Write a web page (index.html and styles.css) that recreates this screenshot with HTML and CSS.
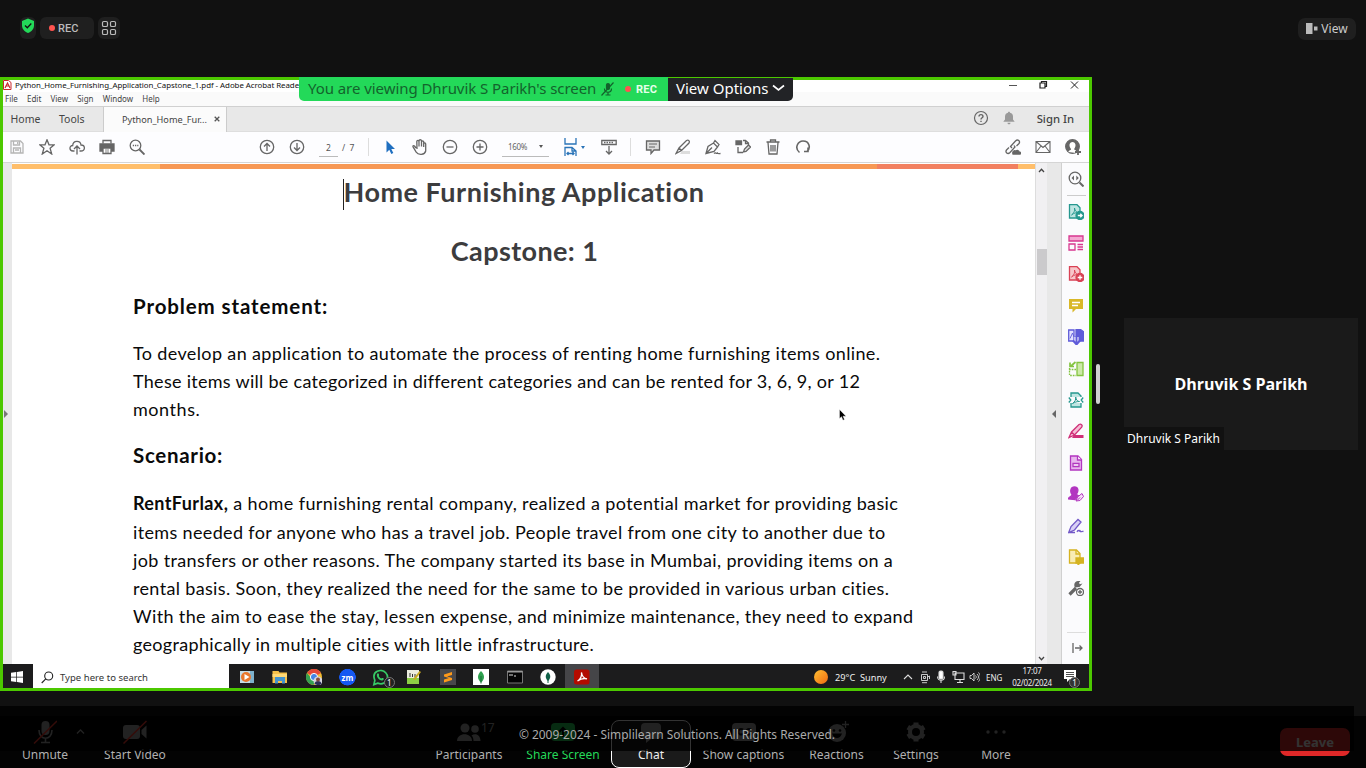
FILE: index.html
```html
<!DOCTYPE html>
<html lang="en">
<head>
<meta charset="utf-8">
<title>Meeting</title>
<link rel="stylesheet" href="styles.css">
</head>
<body>
<header class="topbar">
  <div class="pill shield"><svg width="14" height="16" viewBox="0 0 14 16"><path d="M7 .5 13 3v4.500c0 3.500-2.500 6-6 7.500C3.500 13.500 1 11 1 7.500V3z" fill="#23d959"/><path d="m4 7.500 2.300 2.300L10.300 5.500" fill="none" stroke="#111" stroke-width="1.300"/></svg></div>
  <div class="pill rec"><i class="dot"></i>REC</div>
  <div class="pill apps"><svg width="16" height="16" viewBox="0 0 16 16" fill="none" stroke="#bbb" stroke-width="1.200"><rect x="1.500" y="1.500" width="5" height="5" rx="1.300"/><rect x="9.500" y="1.500" width="5" height="5" rx="1.300"/><rect x="1.500" y="9.500" width="5" height="5" rx="1.300"/><rect x="9.500" y="9.500" width="5" height="5" rx="1.300"/></svg></div>
  <div class="pill view"><svg width="12" height="11" viewBox="0 0 12 11"><path d="M0 0h6.500v11H0z" fill="#bbb"/><path d="M8 3.500h3.500v4H8z" fill="#bbb"/></svg>View</div>
</header>

<main class="stage">
  <section class="share">
    <div class="banner"><div class="viewing"><span class="who">You are viewing Dhruvik S Parikh's screen</span>
      <svg width="13" height="14" viewBox="0 0 13 14" fill="none" stroke="#13632c" stroke-width="1.200"><rect x="5.500" y="1.500" width="3" height="6" rx="1.500" fill="#13632c"/><path d="M3.500 6.500c0 5 7 5 7 0M7 10.500v2.500M4.500 13h5M12.500.5.500 13.500"/></svg>
      <i class="dot"></i><b>REC</b></div><div class="options">View Options<svg width="13" height="8" viewBox="0 0 13 8"><path d="M1 1.500 6.500 6 12 1.500" fill="none" stroke="#fff" stroke-width="1.700"/></svg></div></div>

    <div class="titlebar">
      <svg class="pdf" width="9" height="10" viewBox="0 0 9 10"><path d="M.5.500h5L8 2.500v7H.5z" fill="#fff" stroke="#c9282d"/><path d="m2 8 2.500-5L7 8M3 6h3" fill="none" stroke="#c9282d" stroke-width="1.200"/></svg>
      <span class="wt">Python_Home_Furnishing_Application_Capstone_1.pdf - Adobe Acrobat Reade</span>
      <svg class="winctl" width="76" height="10" viewBox="0 0 76 10" fill="none" stroke="#222"><path d="M2 5.500h8" stroke="#555"/><path d="M33 3h5v5h-5zM34.500 3V1.500h5v5H38" stroke-width="1.200"/><path d="m64 1.500 7 7m0-7-7 7"/></svg>
    </div>
    <nav class="menubar"><span>File</span><span>Edit</span><span>View</span><span>Sign</span><span>Window</span><span>Help</span></nav>

    <div class="tabs">
      <span class="tab home">Home</span><span class="tab tools">Tools</span>
      <span class="tab file"><span>Python_Home_Fur...</span><svg width="6" height="6" viewBox="0 0 6 6"><path d="m.7.700 4.600 4.600m0-4.600L.7 5.300" stroke="#555" stroke-width="1.300"/></svg></span>
      <span class="account">
        <svg width="16" height="16" viewBox="0 0 16 16" fill="none" stroke="#666" stroke-width="1.200"><circle cx="8" cy="8" r="6.500"/><path d="M6 6.500C6 4 10 4 10 6.500 10 7.800 8 7.700 8 9.500M8 10.700v1.200" stroke-width="1.400"/></svg>
        <svg width="14" height="14" viewBox="0 0 14 14" fill="#999"><path d="M7 .7c.8 0 1 .5 1 1C10 2 11 3.500 11 5.500V8.500l1.700 2.300H1.300L3 8.500v-3C3 3.500 4 2 6 1.700c0-.5.200-1 1-1zM5.500 11.700h3c0 2-3 2-3 0z"/></svg>
        <b>Sign In</b>
      </span>
    </div>

    <div class="tools-row">
      <div class="grp g1">
        <span><svg viewBox="0 0 16 16" stroke="#b5b5b5"><path d="M2 2h9.500L14 4.500V14H2z"/><path d="M4.500 2v4h6V2M4.500 14V9h7v5M6 11h4M8.700 3v2"/></svg></span>
        <span><svg viewBox="0 0 16 16"><path d="m8 .8 2 5h5.300l-4.200 3.500 1.600 5.700L8 11.800 3.300 15l1.600-5.700L.7 5.800H6z"/></svg></span>
        <span><svg viewBox="0 0 16 16"><path d="M5.500 12H4C0 12 0 6.500 3.700 6.500 4 1 11.500 1 12 6c4.500 0 4.500 6 0 6h-1.500M8 15.500V7.500M5 10l3-3 3 3"/></svg></span>
        <span><svg viewBox="0 0 16 16"><path d="M4 4.500V1.500h8v3" /><path d="M1 5h14v7H1z" fill="#666"/><path d="M4 9h8v5.500H4z" fill="#fff"/><path d="M6 11h4M6 13h4" stroke-width=".8"/></svg></span>
        <span><svg viewBox="0 0 16 16"><circle cx="6.500" cy="6.500" r="5.300"/><path d="m10.500 10.500 5 5" stroke-width="1.900"/><path d="M3.800 6.500h5.600" stroke-dasharray="1.300 .9"/></svg></span>
      </div>
      <div class="grp g2">
        <span><svg viewBox="0 0 16 16"><circle cx="8" cy="8" r="6.700"/><path d="M8 12V4.500M5 7.500l3-3 3 3"/></svg></span>
        <span><svg viewBox="0 0 16 16"><circle cx="8" cy="8" r="6.700"/><path d="M8 4v7.500m-3-3 3 3 3-3"/></svg></span>
      </div>
      <div class="pageno"><span class="field">2</span><span>/ &nbsp;7</span></div>
      <i class="vr"></i>
      <div class="grp g3">
        <span><svg viewBox="0 0 16 16"><path d="M4.500 1.500v12l2.800-2.700 2 4.200 2-1-2-4h3.700z" fill="#1f6fc0" stroke="none"/></svg></span>
        <span><svg viewBox="0 0 16 16"><path d="M4 9 2.500 7C1.500 6 .5 7 1.200 8.200l3 5c2 3 8.500 3 9.500-1.200V5c0-1.500-2-1.500-2 0v3V3c0-1.500-2.200-1.500-2.200 0v4.500V2C9.500.3 7 .3 7 2v5.500-5C7 1 4.800 1 4.800 2.500L5 10"/></svg></span>
        <span><svg viewBox="0 0 16 16"><circle cx="8" cy="8" r="6.700"/><path d="M4.500 8h7"/></svg></span>
        <span><svg viewBox="0 0 16 16"><circle cx="8" cy="8" r="6.700"/><path d="M4.500 8h7M8 4.500v7"/></svg></span>
      </div>
      <div class="zoom"><span>160%</span><i class="tri"></i></div>
      <div class="fit"><svg viewBox="0 0 16 18" width="16" height="18" stroke="#2a74b8"><path d="M2 0v6h11V0M2 18V9.500h7l4 3.500v5M9 9.500V13h4M4 15.500h7M5.500 14 4 15.500 5.500 17M9.500 14l1.500 1.500L9.500 17"/></svg><i class="tri blue"></i></div>
      <div class="grp g4"><span><svg viewBox="0 0 16 16"><path d="M.8 1.500h14.400v4H.8z"/><path d="M3 3.500h10" stroke-dasharray="1.500 1"/><path d="M8 7v8m-3-3 3 3 3-3"/></svg></span></div>
      <i class="vr"></i>
      <div class="grp g5">
        <span><svg viewBox="0 0 16 16"><path d="M1.500 2h13v9H9l-3 3.500V11H1.500z" fill="#ddd"/><path d="M4 5h8M4 8h6" stroke-width="1"/></svg></span>
        <span><svg viewBox="0 0 16 16"><path d="M7 12h8v3H5z" fill="#ddd" stroke="none"/><path d="M1 14.500 4 9l7.500-7.500c2-1 3.500.5 2.500 2.500l-7.500 7.500zM4 9l2.500 2.500" /></svg></span>
        <span><svg viewBox="0 0 16 16"><path d="m1 14.500 2-7L8.500 4l4 4L9 12.500zM8.500 4l1.500-2.500 4 4L12.500 8M1.500 14 7 8.500M9 14.500c2-2 2 1 3.500-.5.500 1 2 .5 3 .5"/></svg></span>
        <span><svg viewBox="0 0 16 16"><path d="M3 8v5.500h5M8 1.500h2.500L13.500 4v2M10.500 1.500V4.500h3"/><path d="M1 2h5.500v3.500H1z" fill="#666"/><path d="m8.500 13 1-3 4-4 2 2-4.500 4.500z" fill="#ddd"/></svg></span>
        <span><svg viewBox="0 0 16 16"><path d="M1.500 3h13M5.500 3V1h5v2M3 3.500l1 11.500h8l1-11.500M6 6v6.500M8 6v6.500M10 6v6.500"/></svg></span>
        <span><svg viewBox="0 0 16 16"><path d="M4.500 13.500C-1 9 3 2 8 2c6.500 0 8 7 4 10.500M9 12.500h4V8.500" stroke-width="1.600"/></svg></span>
      </div>
      <div class="grp g6">
        <span><svg viewBox="0 0 16 16"><path d="m7 9-1.500-1.500L10.500 2c2.500-2.500 5 .5 3.500 2.500L11.500 7M9 6.500l1 1.500-5 5.500c-2.500 2.500-5-.5-3.500-2.500L4 8.500"/><path d="M8 15c-1-3 2-4 3-2.500 1-2 3-.5 3 .5 2 0 2 2 1 2z" fill="#666"/></svg></span>
        <span><svg viewBox="0 0 16 16"><path d="M1 2.500h14v11H1zM1 2.500l7 6 7-6M1 13.500l5-6.500m9 6.500L10 7" stroke-width="1.100"/></svg></span>
        <span><svg viewBox="0 0 16 16"><circle cx="7.500" cy="7.500" r="6.800" fill="#666"/><path d="M3.500 13c0-2 3-1.500 2.500-3C3 6 5 3 7.500 3S12 6 9.200 10c0 1 1 1 1.800 1.500V14z" fill="#fff" stroke="none"/><path d="M13 10v6M10 13h6" stroke-width="1.800"/></svg></span>
      </div>
    </div>

    <div class="work">
      <div class="gutter left"><i class="arr r"></i></div>
      <article class="page">
        <div class="band"><i class="b1"></i><i class="b2"></i><i class="b3"></i><i class="b4"></i></div>
        <h1><i class="caret"></i>Home Furnishing Application</h1>
        <h2>Capstone: 1</h2>
        <h3 class="t1">Problem statement:</h3>
        <p><span class="a1">To develop an application to automate the process of renting home furnishing items online.</span>
        <span class="a2">These items will be categorized in different categories and can be rented for 3, 6, 9, or 12</span>
        <span class="a3">months.</span></p>
        <h3 class="t2">Scenario:</h3>
        <p><span class="c1"><b>RentFurlax,</b> a home furnishing rental company, realized a potential market for providing basic</span>
        <span class="c2">items needed for anyone who has a travel job. People travel from one city to another due to</span>
        <span class="c3">job transfers or other reasons. The company started its base in Mumbai, providing items on a</span>
        <span class="c4">rental basis. Soon, they realized the need for the same to be provided in various urban cities.</span>
        <span class="c5">With the aim to ease the stay, lessen expense, and minimize maintenance, they need to expand</span>
        <span class="c6">geographically in multiple cities with little infrastructure.</span></p>
        <svg class="pointer" width="8" height="12" viewBox="0 0 8 12"><path d="M.5.500v9l2-1.800 1.500 3.500 1.500-.7L4 7.200h3z" fill="#000" stroke="#fff" stroke-width=".4"/></svg>
      </article>
      <div class="scroll"><svg width="7" height="5" viewBox="0 0 7 5"><path d="m1 4 2.500-2.700L6 4" fill="none" stroke="#444" stroke-width="1.300"/></svg><i class="thumb"></i><svg width="7" height="5" viewBox="0 0 7 5"><path d="m1 1 2.500 2.700L6 1" fill="none" stroke="#444" stroke-width="1.300"/></svg></div>
      <div class="gutter right"><i class="arr l"></i></div>
      <aside class="rail">
        <span class="first"><svg viewBox="0 0 16 16" stroke="#666"><circle cx="7" cy="7" r="5.800"/><path d="m11.500 11.500 4 4" stroke-width="2"/><path d="M6 4.500 3.500 7 6 9.500zM8.300 4.500 10.800 7 8.300 9.500z" fill="#666" stroke="none"/></svg></span>
        <span><svg viewBox="0 0 16 16" stroke="#26988f"><path d="M1.500.700h7.500l3 3V14H1.500z" fill="#bfe5e2"/><path d="M3.500 11C6 9 7 7 6.500 4 7 7 8.500 8.500 10.500 8.500 8 8.500 6 9 3.500 11z" stroke-width=".9"/><circle cx="12" cy="11.500" r="4" fill="#26988f"/><path d="M9.800 11.500H14m-1.700-1.800 1.800 1.800-1.800 1.800" stroke="#fff"/></svg></span>
        <span><svg viewBox="0 0 16 16" stroke="#d83790"><path d="M1 1h14v5H1z" fill="#f4a9d2"/><path d="M1 9h6v6H1zM9.500 9.500H15M9.500 12H15M9.500 14.500H15"/></svg></span>
        <span><svg viewBox="0 0 16 16" stroke="#d94255"><path d="M1.500.700h7.500l3 3V14H1.500z" fill="#f7c6ca"/><path d="M3.500 11C6 9 7 7 6.500 4 7 7 8.500 8.500 10.500 8.500 8 8.500 6 9 3.500 11z" stroke-width=".9"/><circle cx="12" cy="11.500" r="4" fill="#d94255"/><path d="M9.700 11.500h4.600M12 9.200v4.600" stroke="#fff"/></svg></span>
        <span><svg viewBox="0 0 16 16"><path d="M1 1h14v10H8l-3.500 3.500V11H1z" fill="#d9b828" stroke="none"/><path d="M4 4.500h8M4 7.500h6" stroke="#fff"/></svg></span>
        <span><svg viewBox="0 0 16 16" stroke="#5f5bd9"><path d="M.7 1H6v11H.7z" fill="#e4e3ff"/><path d="M8 .5h4.500L16 3v9H8z" fill="#5f5bd9"/><path d="M2 9.500 4.500 4 6 8" stroke-width=".9"/><path d="M8.500 8v7" stroke="#fff" stroke-width="4"/><path d="M8.500 7v8M5 11.500l3.500 4 3.500-4" stroke-width="2"/></svg></span>
        <span><svg viewBox="0 0 16 16" stroke="#84c441"><path d="M9 1.500h6v13H9z" fill="#cceaa8"/><path d="M1.500 7v7.500H8M1 8.500h7" stroke-dasharray="1.700 1"/><path d="M7.500 1 3 5M2 1.500v4h4" stroke-width="1.700"/></svg></span>
        <span><svg viewBox="0 0 16 16" stroke="#26988f"><path d="M3 5V1h7l3 3v1M3 11v4h10v-4" fill="#bfe5e2"/><path d="M.8 5.500 2.800 8l-2 2.500M15.200 5.500l-2 2.500 2 2.500"/><path d="M4.500 11.500C7 9.500 8 8 7.700 5 8 8 9.500 9.500 11.500 9.500 9 9.500 7 10 4.500 11.500z" stroke-width="1"/></svg></span>
        <span><svg viewBox="0 0 16 16" stroke="#cf2f78"><path d="M6 12h9.500v3H4z" fill="#cf2f78" stroke="none"/><path d="m1 14.500 2.500-5.500L11 1.500c2-1 4 .5 2.700 2.700L6.500 12zM3.500 9l3 3" fill="#f6bcd5"/></svg></span>
        <span><svg viewBox="0 0 16 16" stroke="#b236c0"><path d="M2.500 1H10l3.500 3.500V15h-11z" fill="#e8b6ee"/><path d="M9.500 1v4h4M5 8.500h6v3H5z" fill="#fff"/></svg></span>
        <span><svg viewBox="0 0 16 16" stroke="#b236c0"><path d="M.5 13c0-3 4-2 3.500-4.500C1.500 5 3 1 6.500 1s4.500 3.500 2 7c0 1.500 2 1 2 2L7 13.500z" fill="#b236c0"/><path d="m8 15 1.500-4L14 7.500l1.500 3-3.500 4zM9 14.500l3-3" fill="#f6dff8" stroke-width="1"/></svg></span>
        <span><svg viewBox="0 0 16 16" stroke="#7359c8"><path d="M.7 14.500 3 8.500 10 1.500l3 2.500-6.500 8zM1 14.500h6M9 14c2-4 2 1 3-2 0 3 1.500 1 3.500 1.500" fill="#d9d0f6"/></svg></span>
        <span><svg viewBox="0 0 16 16" stroke="#d5b321"><path d="M1.500 1h7l3.500 3.500V14H1.500z" fill="#f8ecb4"/><path d="M8 1v4h4"/><path d="M8 9h7.500v5H12l-2 2v-2H8z" fill="#d5b321"/></svg></span>
        <span><svg viewBox="0 0 16 16" stroke="#666"><path d="M1.500 14.500 8 8" stroke-width="3.200"/><path d="M10 1c-3.500 0-4.500 4-3 6.500l4.500-.5L14.500 3.500l-2.700.7-.8-1.500L12.500 1z" fill="#666" stroke="none"/><circle cx="12" cy="12" r="3.500" fill="#fff"/><path d="M10 12h4M12 10v4"/></svg></span>
        <span class="last"><svg viewBox="0 0 16 16" stroke="#666"><path d="M5 3v10M7 8h7m-2.500-2.500L14 8l-2.500 2.500"/></svg></span>
      </aside>
    </div>

    <div class="taskbar">
      <div class="start"><svg width="12" height="12" viewBox="0 0 12 12" fill="#fff"><path d="M0 1.700 5.300 1v4.700H0zM6 .9 12 0v5.700H6zM0 6.400h5.300V11L0 10.300zM6 6.400h6V12l-6-.9z"/></svg></div>
      <div class="search"><svg width="13" height="13" viewBox="0 0 13 13" fill="none" stroke="#222" stroke-width="1.100"><circle cx="7.700" cy="5" r="4"/><path d="M4.800 7.800.7 12"/></svg>Type here to search</div>
      <div class="apps-row">
        <span><svg viewBox="0 0 16 16"><path d="M4 2h11v12H4z" fill="#7eb1cc"/><path d="M1 2h10v12H1z" fill="#c4dce8"/><circle cx="7" cy="8" r="5" fill="#e8762c"/><path d="m5.500 5 5 3-5 3z" fill="#fff"/></svg></span>
        <span><svg viewBox="0 0 16 16"><path d="M.5 2h6l1 1.500H15V14H.5z" fill="#f5c04a"/><path d="M.5 5H15v3H.5z" fill="#ffd977"/><path d="M3 8h10v6.500h-3V12H6v2.500H3z" fill="#4494cf"/></svg></span>
        <span><svg viewBox="0 0 16 16"><circle cx="8" cy="8" r="8" fill="#f3bd2f"/><path d="M8 8 1 4a8 8 0 0 1 14 0z" fill="#e4483b"/><path d="M1 4a8 8 0 0 0 6.500 12L10 10 6 10z" fill="#35a152"/><circle cx="8" cy="8" r="3.600" fill="#4384e8" stroke="#fff"/><circle cx="12" cy="12" r="4.500" fill="#d5d4df"/><path d="M8.500 15c0-4 7-4 7 0l-3 1.500z" fill="#2c2e58"/><circle cx="12" cy="10.500" r="2" fill="#83483b"/></svg></span>
        <span class="zm">zm</span>
        <span><svg viewBox="0 0 18 18" class="wa"><path d="M2 16.500 3 12C-1 2 10-1 14.500 4s0 14-8.500 11z" fill="none" stroke="#37ca66" stroke-width="1.800"/><path d="M5.500 5c1-1.500 2 0 2 1.500-1 1 1 3 2.500 3.500 1-1 2.500-.5 2.500.8-2.500 4-9-2.300-7-5.800z" fill="#37ca66"/></svg><em class="badge">1</em></span>
        <span><svg viewBox="0 0 16 16"><path d="M1 1h12v14H1z" fill="#ececdf"/><path d="M1 9h12v6H1z" fill="#8dcf45"/><path d="M4 4v4M6.500 5v3M9 5v3" stroke="#333"/><path d="m7 10 6.500-8L15 3 9 11z" fill="#c8a821"/></svg></span>
        <span><svg viewBox="0 0 16 16"><path d="M0 0h16v16H0z" fill="#48484b"/><path d="m4 5.500 8-2.500v3L7 7.500l5 1.500v2L4 13.500v-3L9 9 4 7.500z" fill="#ff9a1a"/></svg></span>
        <span><svg viewBox="0 0 16 16"><path d="M0 0h16v16H0z" fill="#fff"/><path d="M8 2c4 4 4 8 0 11.500C4 10 4 6 8 2z" fill="#2ea04e"/><path d="M8 7v7.500" stroke="#176b35"/></svg></span>
        <span><svg viewBox="0 0 16 16"><path d="M.5 2h15v12H.5z" fill="#050505" stroke="#777"/><path d="M.5 2h15v1.500H.5z" fill="#999"/><path d="M2 6h4m1 1h2" stroke="#ddd"/></svg></span>
        <span><svg viewBox="0 0 16 16"><circle cx="8" cy="8" r="7.700" fill="#fff"/><path d="M8 3c3 3 3 6 0 9-3-3-3-6 0-9z" fill="#116149"/><path d="M8 8v6" stroke="#116149"/></svg></span>
        <span class="on"><svg viewBox="0 0 16 16"><rect x="0" y=".5" width="15.500" height="15" rx="2.500" fill="#b30b00"/><path d="M3.500 12C7 10 8 6 7.500 3.500 8 7 10 9.500 13 9.800 9.500 9 7 9.500 3.500 12z" fill="none" stroke="#fff" stroke-width="1.300"/></svg></span>
      </div>
      <div class="tray">
        <svg class="sun" width="14" height="14" viewBox="0 0 14 14"><defs><linearGradient id="s" x2="1" y2="1"><stop stop-color="#ffc032"/><stop offset="1" stop-color="#f06a12"/></linearGradient></defs><circle cx="7" cy="7" r="7" fill="url(#s)"/></svg>
        <span class="weather">29°C &nbsp;Sunny</span>
        <svg class="sys" width="78" height="14" viewBox="0 0 78 14" fill="none" stroke="#ddd" stroke-width="1.100"><path d="m2 9 4-4 4 4"/><path d="M19.500 4.500h6v6h-6zM20 2h5M20 12.700h5M25.500 7l2-1v3M21.500 6.500h2v2h-2z" stroke-width=".9"/><rect x="37" y="1" width="4" height="8" rx="1.500" fill="#fff"/><path d="M35.500 6.500c0 5 7 5 7 0M39 10.500V13"/><path d="M53 3h9v6.500h-9zM55 12.500h6M58 10v2M51 1.500h3V5h-3z"/><path d="M68 5.500h1.500L72 3v8L69.500 8.500H68zM73.500 5.500c1 1 1 2 0 3M75 4c2 2 2 4 0 6M76.500 2.500c2.500 3 2.500 6 0 9" stroke-width=".9"/></svg>
        <span class="eng">ENG</span>
        <span class="clock"><span>17:07</span><span>02/02/2024</span></span>
        <span class="note"><svg width="13" height="13" viewBox="0 0 13 13"><path d="M0 0h12v9H6l-3 3V9H0z" fill="#fff"/><path d="M2 2.500h8M2 4.500h8M2 6.500h8" stroke="#222" stroke-width=".8"/></svg><em class="badge">1</em></span>
      </div>
    </div>
  </section>

  <i class="handle"></i>
  <section class="tile"><strong>Dhruvik S Parikh</strong><span class="name">Dhruvik S Parikh</span></section>
</main>

<footer class="bar">
  <div class="ctl unmute"><svg width="24" height="24" viewBox="0 0 24 24"><rect x="8.500" y="1" width="8" height="14" rx="4" fill="#aaa"/><path d="M6 10c0 11 13 11 13 0M12.500 18.500V22M8 22.500h9" fill="none" stroke="#aaa" stroke-width="1.600"/><path d="M24 1 1 23.500" stroke="#ff3a2c" stroke-width="1.500"/></svg><label>Unmute</label></div>
  <div class="ctl chev"><svg width="9" height="24" viewBox="0 0 9 24"><path d="m1 13.500 3.500-3.500L8 13.500" fill="none" stroke="#aaa" stroke-width="1.300"/></svg></div>
  <div class="ctl video"><svg width="26" height="24" viewBox="0 0 26 24"><rect x="1" y="5" width="17" height="14" rx="3" fill="#aaa"/><path d="m19.500 10 5-4.500v13l-5-4.500z" fill="#aaa"/><path d="M24.500 1 1.500 23.500" stroke="#ff3a2c" stroke-width="1.500"/></svg><label>Start Video</label></div>
  <div class="ctl people"><svg width="26" height="24" viewBox="0 0 26 24" fill="#aaa"><circle cx="9" cy="8" r="4.500"/><path d="M1 21c0-9 15-9 15 0z"/><circle cx="19" cy="9" r="3.800"/><path d="M17.500 21c0-3-1-4.500-2-5.500 4-3 9-.5 9 5.500z"/></svg><em>17</em><label>Participants</label></div>
  <div class="ctl sharing"><svg width="24" height="24" viewBox="0 0 24 24"><rect x="0" y="3" width="24" height="18" rx="4" fill="#23d959"/><path d="M12 17V8m-4 4 4-4 4 4" fill="none" stroke="#000" stroke-width="2"/></svg><label>Share Screen</label></div>
  <div class="ctl chat"><svg width="22" height="24" viewBox="0 0 22 24"><path d="M5 3h12q4 0 4 4v8q0 4-4 4h-6l-5 4v-4q-5 0-5-4V7q0-4 4-4z" fill="#aaa"/></svg><svg class="up" width="9" height="6" viewBox="0 0 9 6"><path d="m1 5 3.500-3.500L8 5" fill="none" stroke="#aaa" stroke-width="1.300"/></svg><label>Chat</label></div>
  <div class="ctl captions"><svg width="26" height="24" viewBox="0 0 26 24"><rect x="1" y="3" width="24" height="18" rx="4" fill="#aaa"/><path d="M12 9.500c-6-3-6 7.500 0 4.500m8-4.500c-6-3-6 7.500 0 4.500" fill="none" stroke="#111" stroke-width="2"/></svg><label>Show captions</label></div>
  <div class="ctl react"><svg width="24" height="24" viewBox="0 0 24 24"><circle cx="12" cy="13" r="9" fill="#aaa"/><circle cx="9" cy="10.500" r="1.300"/><circle cx="15" cy="10.500" r="1.300"/><path d="M7 13.500c2 6 8 6 10 0z"/><path d="M20.500 1v7M17 4.500h7" stroke="#aaa" stroke-width="1.300"/></svg><label>Reactions</label></div>
  <div class="ctl settings"><svg width="24" height="24" viewBox="0 0 24 24"><circle cx="12" cy="12" r="6" fill="none" stroke="#aaa" stroke-width="4"/><path d="M12 2.500v19M3.800 7.200l16.400 9.600M20.200 7.200 3.800 16.800" stroke="#aaa" stroke-width="5"/><circle cx="12" cy="12" r="4"/></svg><label>Settings</label></div>
  <div class="ctl more"><svg width="22" height="24" viewBox="0 0 22 24" fill="#aaa"><circle cx="3" cy="12" r="1.700"/><circle cx="11" cy="12" r="1.700"/><circle cx="19" cy="12" r="1.700"/></svg><label>More</label></div>
  <button class="leave">Leave</button>
  <div class="veil"><span>© 2009-2024 - Simplilearn Solutions. All Rights Reserved.</span></div>
</footer>
</body>
</html>
```
FILE: styles.css
```css
* { box-sizing: border-box; }
body { margin: 0; width: 1366px; height: 768px; overflow: hidden; background: #111; color: #ccc; font-family: "Noto Sans", sans-serif; display: flex; flex-direction: column; }
svg { display: block; flex: none; }
em { font-style: normal; }

.topbar { height: 77px; flex: none; display: flex; align-items: flex-start; padding: 17px 10px 0 20px; }
.pill { height: 22px; border-radius: 6px; background: #1f1f1f; display: flex; align-items: center; justify-content: center; font-size: 12px; }
.shield { width: 16px; align-items: flex-start; padding-top: 1px; }
.rec { width: 54px; margin-left: 4px; justify-content: flex-start; padding-left: 9px; font: 500 11px Roboto, sans-serif; letter-spacing: .1px; color: #bbb; gap: 3px; }
.dot { width: 6px; height: 6px; border-radius: 50%; background: #ff5450; }
.apps { width: 22px; margin-left: 4px; }
.view { width: 58px; margin: 1px 0 0 auto; gap: 3px; border-radius: 7px; padding-bottom: 1px; }

.stage { height: 629px; flex: none; display: flex; align-items: flex-start; }
.share { position: relative; width: 1092px; height: 614px; border: 3px solid #4cc800; background: #fff; display: flex; flex-direction: column; color: #333; }
.banner { position: absolute; left: 296px; top: 0; margin-top: -3px; display: flex; align-items: flex-start; z-index: 2; }
.viewing { width: 369px; height: 24px; background: #23d959; border-radius: 0 0 0 5px; display: flex; align-items: center; padding-left: 9px; color: #13632c; font-size: 15px; }
.who { width: 293px; white-space: nowrap; letter-spacing: -.06px; padding-bottom: 2px; }
.viewing .dot { margin-left: 11px; }
.viewing b { font: 700 11px Roboto, sans-serif; letter-spacing: .3px; color: #e6ffe9; margin-left: 5px; }
.options { width: 125px; height: 23px; margin-top: 1px; background: #222326; border-radius: 0 0 5px 0; color: #fff; font-size: 15px; display: flex; align-items: center; padding: 0 0 3px 8px; gap: 4px; white-space: nowrap; }

.titlebar { height: 12px; flex: none; display: flex; align-items: center; font-size: 7.900px; color: #111; padding-bottom: 2px; }
.wt { margin-left: 3px; white-space: nowrap; line-height: 10px; letter-spacing: -.055px; }
.winctl { margin-left: auto; margin-right: 6px; }
.menubar { height: 14px; flex: none; display: flex; align-items: center; gap: 9.200px; padding: 0 0 1px 2px; font-size: 8px; background: #fafafa; color: #444; }
.tabs { height: 26px; flex: none; display: flex; background: #e8e8e8; border-top: 1px solid #d0d0d0; border-bottom: 1px solid #dedede; font-size: 10.500px; color: #444; }
.tab { display: flex; align-items: center; padding-bottom: 1px; }
.home { padding-left: 7.500px; width: 56px; }
.tools { width: 44px; }
.file { width: 124px; background: #fbfbfb; border-left: 1px solid #ccc; border-right: 1px solid #ccc; padding-left: 18px; font-size: 9.200px; height: 25px; justify-content: space-between; padding-right: 6px; white-space: nowrap; }
.account { margin-left: auto; display: flex; align-items: center; padding: 0 15px 2px 0; }
.account b { font-weight: 500; margin-left: 20px; font-size: 11.300px; }
.account svg { margin-left: -1px; margin-right: 1px; }
.account svg + svg { margin-left: 12px; }

.tools-row { height: 31px; flex: none; display: flex; align-items: center; background: #fdfdff; border-bottom: 1px solid #d5d5d5; }
.grp { display: flex; }
.grp span { width: 30px; display: flex; justify-content: center; }
.grp svg { width: 16px; height: 16px; }
.tools-row svg { fill: none; stroke-width: 1.300; }
.grp svg { stroke: #666; }
.g1 { margin-left: -1px; }
.g1 span:first-child svg { stroke: #b5b5b5; }
.g2 { margin-left: 100px; }
.pageno { width: 56px; display: flex; font-size: 8.500px; gap: 4px; padding-left: 7px; color: #555; }
.field { width: 19px; text-align: center; border-bottom: 1px solid #bbb; height: 19px; line-height: 19px; }
.pageno span + span { line-height: 19px; }
.vr { width: 1px; height: 18px; background: #ddd; }
.g3 { margin-left: 6px; }
.zoom { width: 47px; height: 19px; border-bottom: 1px solid #bbb; margin: 0 0 0 7px; display: flex; align-items: center; justify-content: space-between; padding: 0 6px 0 6px; font-size: 8px; letter-spacing: -.3px; color: #666; }
.tri { border: 2.500px solid transparent; border-top: 3px solid #555; border-bottom: 0; }
.tri.blue { border-top-color: #2a74b8; }
.fit { display: flex; align-items: center; margin-left: 14px; width: 31px; gap: 2px; }
.g4 + .vr { margin-left: 6px; }
.g5 { margin-left: 7px; }
.g6 { margin-left: 180px; }

.work { height: 501px; flex: none; display: flex; overflow: hidden; }
.gutter { background: #e8e8e8; display: flex; align-items: center; justify-content: center; }
.left { width: 9px; padding-right: 3px; }
.right { width: 14px; }
.arr { border: 4px solid transparent; }
.arr.r { border-left: 4px solid #777; border-right: 0; }
.arr.l { border-right: 4px solid #666; border-left: 0; }
.page { position: relative; width: 1023px; background: #fff; font-family: Lato, sans-serif; color: #0a0a0a; }
.band { display: flex; height: 5px; margin: 1px 0; }
.b1 { width: 148px; background: #ffbe6a; }
.b2 { width: 717px; background: #f79854; }
.b3 { width: 141px; background: #f28060; }
.b4 { width: 17px; background: #ffbe6a; }
h1, h2, h3, p { margin: 0; white-space: nowrap; font-variant-ligatures: none; }
h1, h2 { height: 44px; line-height: 44px; font-size: 27px; text-align: center; color: #3c3c3e; font-weight: 700; }
h1 { position: relative; letter-spacing: .5px; padding-left: 1px; }
h2 { margin-top: 15px; letter-spacing: .4px; padding-left: 2px; }
.caret { position: absolute; left: 331px; top: 9px; width: 1px; height: 31px; background: #222; }
h3 { margin: 20px 0 19px 121px; height: 27px; line-height: 26px; font-size: 20.500px; }
.t1 { letter-spacing: .88px; }
.t2 { letter-spacing: .7px; margin-top: 19px; margin-bottom: 20px; }
p { margin-left: 121px; font-size: 18px; line-height: 28.150px; }
p span { display: block; }
.a1 { letter-spacing: .365px; }
.a2 { letter-spacing: .29px; }
.a3 { letter-spacing: .55px; }
.c1 { letter-spacing: .39px; }
.c2 { letter-spacing: .35px; }
.c3 { letter-spacing: .365px; }
.c4 { letter-spacing: .342px; }
.c5 { letter-spacing: .365px; }
.c6 { letter-spacing: .325px; }
.pointer { position: absolute; left: 827px; top: 246px; }
.scroll { width: 12px; background: #f1f0f2; border-left: 1px solid #ddd; display: flex; flex-direction: column; align-items: center; padding: 5px 0 3px; }
.thumb { width: 10px; height: 26px; background: #cbcacc; margin: 76px 0 auto; }
.rail { width: 28px; background: #fbfbfd; border-left: 1px solid #d0d0d0; display: flex; flex-direction: column; align-items: center; padding-left: 1px; }
.rail span { height: 31.400px; display: flex; align-items: center; }
.rail svg { width: 16px; height: 16px; fill: none; stroke-width: 1.300; }
.rail .first { height: 33px; border-bottom: 1px solid #ccc; width: 19px; justify-content: center; }
.rail .last { margin-top: 28px; border-top: 1px solid #ddd; width: 19px; justify-content: center; }

.taskbar { height: 24px; flex: none; display: flex; background: #1c1c1d; color: #eee; }
.start { width: 30px; display: flex; align-items: center; justify-content: center; padding: 2px 3px 0 0; }
.search { width: 196px; background: #fff; color: #333; display: flex; align-items: center; gap: 6px; padding: 3px 0 0 8px; font-size: 9.500px; letter-spacing: .03px; }
.apps-row { display: flex; margin-left: 1.200px; }
.apps-row span { position: relative; width: 33.500px; display: flex; align-items: center; justify-content: center; padding-top: 2px; }
.apps-row svg { width: 16px; height: 16px; }
.apps-row .wa { width: 17px; height: 17px; }
.apps-row .on { background: #454548; }
.apps-row .zm { font: 700 8px "Open Sans", sans-serif; color: #fff; background: radial-gradient(circle at 50% 55%, #1558f2 8px, transparent 8.500px); }
.badge { position: absolute; width: 11px; height: 11px; border: 1px solid #777; border-radius: 50%; background: #222; color: #fff; font-size: 8px; line-height: 9px; text-align: center; right: 3px; bottom: 0; }
.tray { margin-left: auto; margin-right: 6px; display: flex; align-items: center; padding-top: 2px; font-size: 9.200px; white-space: nowrap; }
.weather { width: 63px; margin-left: 7px; }
.sys { margin-left: 4px; }
.eng { margin-left: 6px; width: 20px; font-size: 8px; }
.clock { width: 50px; margin-left: 1px; display: flex; flex-direction: column; align-items: center; font-size: 8px; line-height: 12px; letter-spacing: -.3px; margin-top: -1px; }
.note { position: relative; width: 26px; height: 20px; padding: 3px 0 0 7px; }
.note .badge { right: 3px; bottom: -1px; background: #333; }

.handle { width: 4px; height: 40px; border-radius: 2px; background: #d0d0d0; margin: 287px 0 0 4px; }
.tile { width: 234px; height: 132px; margin: 241px 0 0 24px; background: #1a1a1a; position: relative; display: flex; align-items: center; justify-content: center; color: #fff; }
.tile strong { font: 700 16px "Open Sans", sans-serif; padding-bottom: 1px; letter-spacing: -.02px; }
.name { position: absolute; left: 0; bottom: 0; height: 23px; width: 100px; background: #111; font-size: 12px; line-height: 24px; padding-left: 3px; white-space: nowrap; }

.bar { position: relative; height: 62px; flex: none; display: flex; background: linear-gradient(#111 10px, #030303 10px); padding-top: 14px; }
.ctl { position: relative; display: flex; flex-direction: column; align-items: center; height: 48px; font-size: 12px; }
.ctl label { line-height: 16px; margin-top: 3px; white-space: nowrap; color: #b0b0b0; }
.unmute { width: 60px; margin-left: 15px; }
.chev { width: 10px; }
.video { width: 100px; }
.people { width: 100px; margin-left: 234px; }
.people em { position: absolute; left: 62px; top: -1px; color: #aaa; }
.sharing { width: 88px; }
.sharing label { color: #23d959; }
.chat { width: 80px; margin: 0 4px; background: #1a1a1a; border: 1px solid #fff; border-radius: 8px; }
.chat svg { margin-top: -1px; }
.chat .up { position: absolute; left: 64px; top: 9px; margin: 0; }
.chat label { color: #eee; }
.captions { width: 97px; }
.react { width: 89px; }
.settings { width: 70px; }
.more { width: 90px; }
.leave { width: 70px; height: 28px; margin: 8px 16px 0 auto; border: 0; border-radius: 7px; background: #e02828; color: #fff; font: 700 13px "Noto Sans", sans-serif; padding: 0; }
.veil { position: absolute; left: 0; top: 0; width: 1354px; height: 45px; background: rgba(0, 0, 0, .8); display: flex; justify-content: center; align-items: center; color: #aaa; font-size: 11.950px; padding-top: 11px; }
```
